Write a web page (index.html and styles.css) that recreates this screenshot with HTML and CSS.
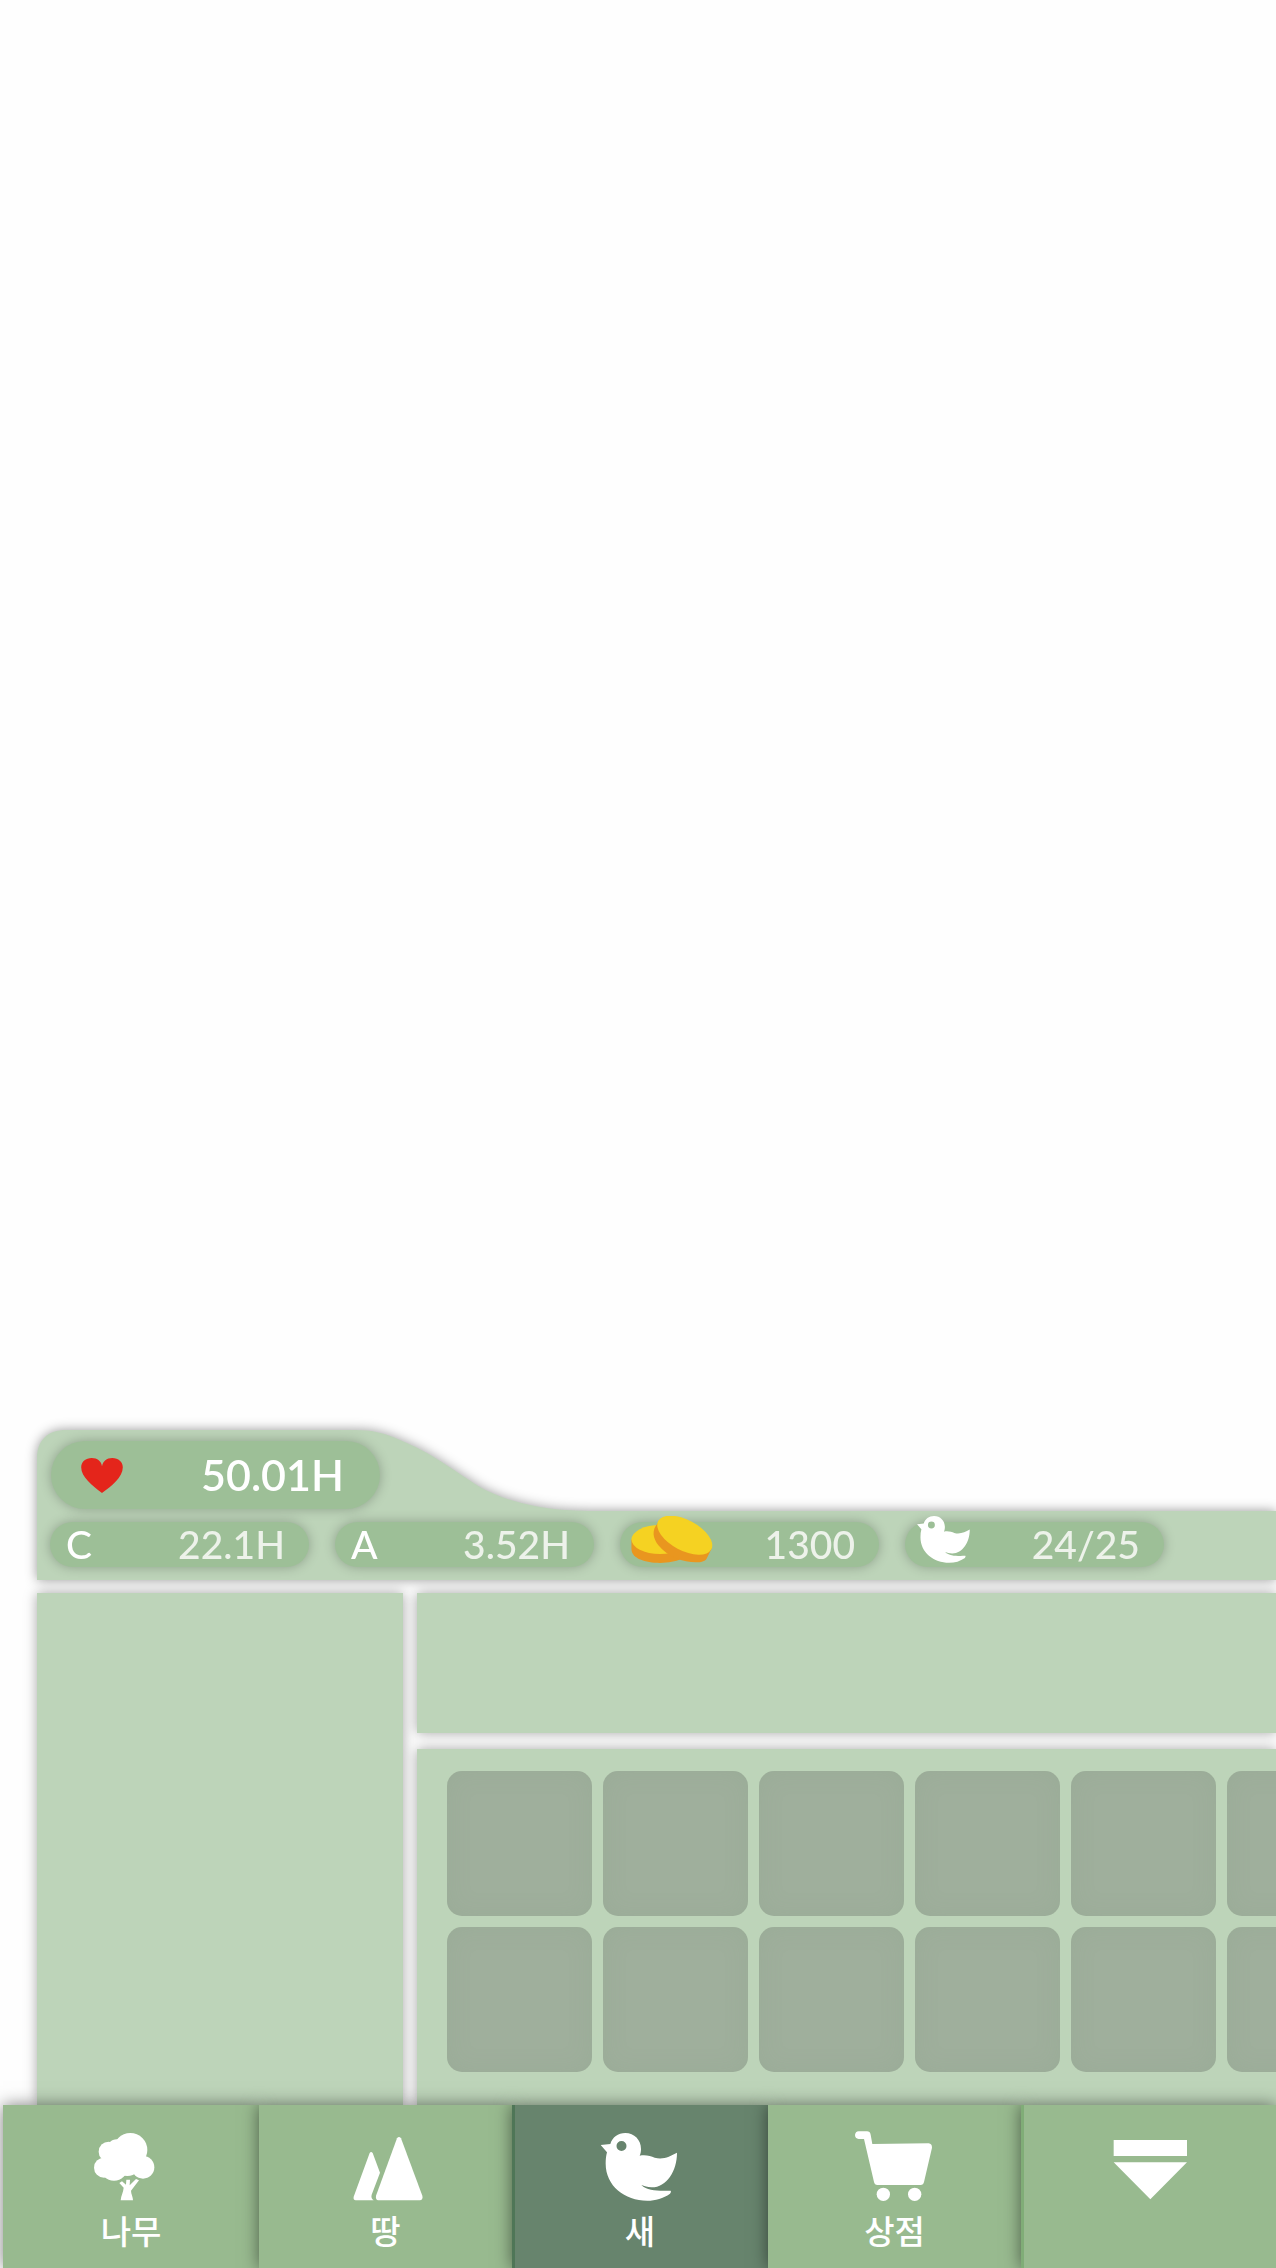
FILE: index.html
```html
<!DOCTYPE html>
<html lang="ko">
<head>
  <meta charset="utf-8">
  <meta name="viewport" content="width=device-width, initial-scale=1">
  <title>새</title>
  <link rel="stylesheet" href="styles.css">
</head>
<body>
  <svg class="symbols" aria-hidden="true">
    <symbol id="bird" viewBox="540 159 230 204">
      <path fill-rule="evenodd" d="M540 195L569 192C575 172 592 159 614 159C641 159 661 180 661 206C661 214 660 221 657 227C674 223 690 228 702 233C728 240 748 229 769 218C769 274 737 323 692 322C681 321 671 318 662 315C681 334 718 333 750 332C752 335 750 338 748 341C728 355 704 362 680 362C612 362 555 317 555 251C555 239 556 228 559 217ZM602.500 183A15 15 0 1 0 602.500 213A15 15 0 1 0 602.500 183Z"/>
    </symbol>
  </svg>

  <main class="game">
    <div class="scene"></div>

    <header class="status">
      <div class="tab">
        <svg class="tab-shape" viewBox="0 0 553 82" aria-hidden="true">
          <path d="M0 82V28C0 10 11 0 29 0H319C335 0 348 3 363 10C395 23 413 38 443 57C472 73 509 81 553 81V82Z"/>
        </svg>
        <div class="pill pill-large">
          <svg class="heart" viewBox="183 144 126 106" aria-hidden="true">
            <path d="M246 250C217 228 183 202 183 172C183 155 197 144 215 144C232 144 244 154 246 169C249 154 260 144 277 144C296 144 309 156 309 172C309 202 275 229 246 250Z"/>
          </svg>
          <span class="value">50.01H</span>
        </div>
      </div>
      <div class="bar">
        <div class="pill"><span class="letter">C</span><span class="value">22.1H</span></div>
        <div class="pill"><span class="letter">A</span><span class="value">3.52H</span></div>
        <div class="pill pill-coins">
          <svg class="coins" viewBox="692 318 247 142" aria-hidden="true">
            <path class="coin-edge" d="M693 388V418C693 447 735 460 779 460C806 460 826 455 842 449L830 400Z"/>
            <ellipse class="coin-face" cx="779" cy="389" rx="86" ry="44"/>
            <path class="coin-edge" d="M772 340C754 361 757 385 775 407C801 440 850 458 888 458C903 458 915 455 920 447L936 415L850 360Z"/>
            <ellipse class="coin-face" cx="854" cy="376" rx="91" ry="46" transform="rotate(28 854 376)"/>
          </svg>
          <span class="value">1300</span>
        </div>
        <div class="pill pill-birds">
          <svg class="small-bird" aria-hidden="true"><use href="#bird"/></svg>
          <span class="value">24/25</span>
        </div>
      </div>
    </header>

    <div class="content">
      <section class="panel detail"></section>
      <section class="panel summary"></section>
      <section class="panel inventory">
        <ul class="slots">
          <li></li><li></li><li></li><li></li><li></li><li></li>
          <li></li><li></li><li></li><li></li><li></li><li></li>
        </ul>
      </section>
    </div>

    <nav class="menu">
      <button class="item" type="button">
        <svg class="icon" viewBox="261 150 264 216" aria-hidden="true">
          <circle cx="391" cy="210" r="51"/>
          <circle cx="326" cy="215" r="30"/>
          <circle cx="351" cy="210" r="32"/>
          <circle cx="312" cy="263" r="30"/>
          <circle cx="342" cy="261" r="41"/>
          <circle cx="382" cy="246" r="42"/>
          <circle cx="429" cy="262" r="34"/>
          <path d="M362 361C363 347 370 336 371 323L358 309L366 304L378 314L379 299H390L389 316L408 297L417 301L393 332C393 343 399 350 399 361Z"/>
        </svg>
        <span>나무</span>
      </button>
      <button class="item" type="button">
        <svg class="icon" viewBox="1024 150 264 216" aria-hidden="true">
          <path d="M1107 219Q1111 213 1116 219L1138 278L1113 344Q1110 355 1119 361H1065Q1057 360 1059 350Z"/>
          <path d="M1189 175Q1195 167 1201 175L1265 347Q1268 359 1257 361H1133Q1124 359 1126 347Z"/>
        </svg>
        <span>땅</span>
      </button>
      <button class="item item-active" type="button" aria-current="page">
        <svg class="icon" viewBox="526 150 264 216" aria-hidden="true">
          <use href="#bird" x="540" y="159" width="230" height="204"/>
        </svg>
        <span>새</span>
      </button>
      <button class="item" type="button">
        <svg class="icon" viewBox="30 150 264 216" aria-hidden="true">
          <path d="M53 154H78Q87 154 89 164L94 192L263 190Q273 191 273 203L249 306Q247 315 239 315H109Q101 315 99 306L69 177H53Q42 176 42 165Q43 155 53 154Z"/>
          <circle cx="127" cy="343" r="20"/>
          <circle cx="221" cy="343" r="20"/>
        </svg>
        <span>상점</span>
      </button>
      <button class="item item-close" type="button" aria-label="닫기">
        <svg class="icon" viewBox="795 150 264 216" aria-hidden="true">
          <path d="M821 180H1041V228H821ZM821 247H1041L931 358Z"/>
        </svg>
      </button>
    </nav>
  </main>
</body>
</html>
```

FILE: styles.css
```css
* {
  box-sizing: border-box;
}

body {
  margin: 0;
  background: #fefefe;
  font-family: Lato, "Noto Sans CJK KR", sans-serif;
  overflow-x: hidden;
}

.symbols {
  position: absolute;
  width: 0;
  height: 0;
}

.game {
  display: flex;
  flex-direction: column;
  min-height: 100vh;
}

.scene {
  flex: 1;
}

/* Status header: a raised tab on top of a full-width bar */
.status {
  margin-left: 37px;
  filter: drop-shadow(0 0 6px rgba(0, 0, 0, 0.4));
}

.tab {
  position: relative;
  height: 81px;
  padding: 11px 14px 0;
}

.tab-shape {
  position: absolute;
  top: 0;
  left: 0;
  width: 553px;
  height: 82px;
  fill: #bdd4b9;
}

.bar {
  display: flex;
  gap: 26px;
  padding: 11px 13px 13px;
  background: #bdd4b9;
}

.pill {
  position: relative;
  display: flex;
  flex: none;
  align-items: center;
  justify-content: space-between;
  width: 259px;
  height: 45px;
  padding: 0 24px 2px 16px;
  border-radius: 34px;
  background: #9dbf97;
  box-shadow: 0 0 12px rgba(0, 0, 0, 0.25);
  color: #edf2ea;
  font-size: 39px;
  font-weight: 500;
  line-height: 44px;
}

.pill-large {
  width: 329px;
  height: 68px;
  padding: 0 36px 0 30px;
  color: #fff;
  font-size: 43px;
  font-weight: 600;
}

.pill-coins {
  padding-left: 11px;
}

.pill-birds {
  padding-left: 12px;
}

.letter {
  color: #fff;
}

.heart {
  width: 42px;
  height: 35px;
  fill: #e4251b;
}

.coins {
  width: 82px;
  height: 47px;
  margin-bottom: 8px;
}

.coin-face {
  fill: #f5d222;
}

.coin-edge {
  fill: #e9961f;
}

.small-bird {
  width: 53px;
  height: 47px;
  margin-bottom: 8px;
  fill: #fff;
}

/* Panels below the header */
.content {
  display: grid;
  grid-template-columns: 366px minmax(0, 1fr);
  grid-template-rows: 140px auto;
  gap: 16px 14px;
  padding: 13px 0 0 37px;
}

.panel {
  background: #bdd4b9;
  box-shadow: 0 0 12px rgba(0, 0, 0, 0.35);
}

.detail {
  grid-row: 1 / 3;
}

.inventory {
  padding: 22px 0 33px 30px;
}

.slots {
  display: grid;
  grid-template-columns: repeat(6, 145px);
  grid-auto-rows: 145px;
  gap: 11px;
  margin: 0;
  padding: 0;
  overflow: hidden;
  list-style: none;
}

.slots li {
  border-radius: 15px;
  background: #9faf9c;
  box-shadow: inset 0 0 24px rgba(130, 155, 130, 0.15);
}

/* Bottom menu */
.menu {
  position: relative;
  display: grid;
  grid-template-columns: 256fr 253fr 256fr 253fr 255fr;
  height: 163px;
  margin-left: 3px;
}

.item {
  position: relative;
  display: flex;
  flex-direction: column;
  align-items: center;
  gap: 4px;
  padding: 25px 0 0;
  border: 0;
  background: #98ba8f;
  box-shadow: 0 0 16px rgba(0, 0, 0, 0.5);
  color: #fff;
  font-family: "Noto Sans CJK KR", sans-serif;
  font-size: 33px;
  font-weight: 500;
  line-height: 48px;
  cursor: pointer;
}

.item-active {
  background: linear-gradient(to right, #4f7657 3px, #67846d 3px);
}

.item-close {
  background: linear-gradient(to right, #80ad77 3px, #98ba8f 3px);
}

.icon {
  width: 88px;
  height: 72px;
  fill: #fff;
}
```
